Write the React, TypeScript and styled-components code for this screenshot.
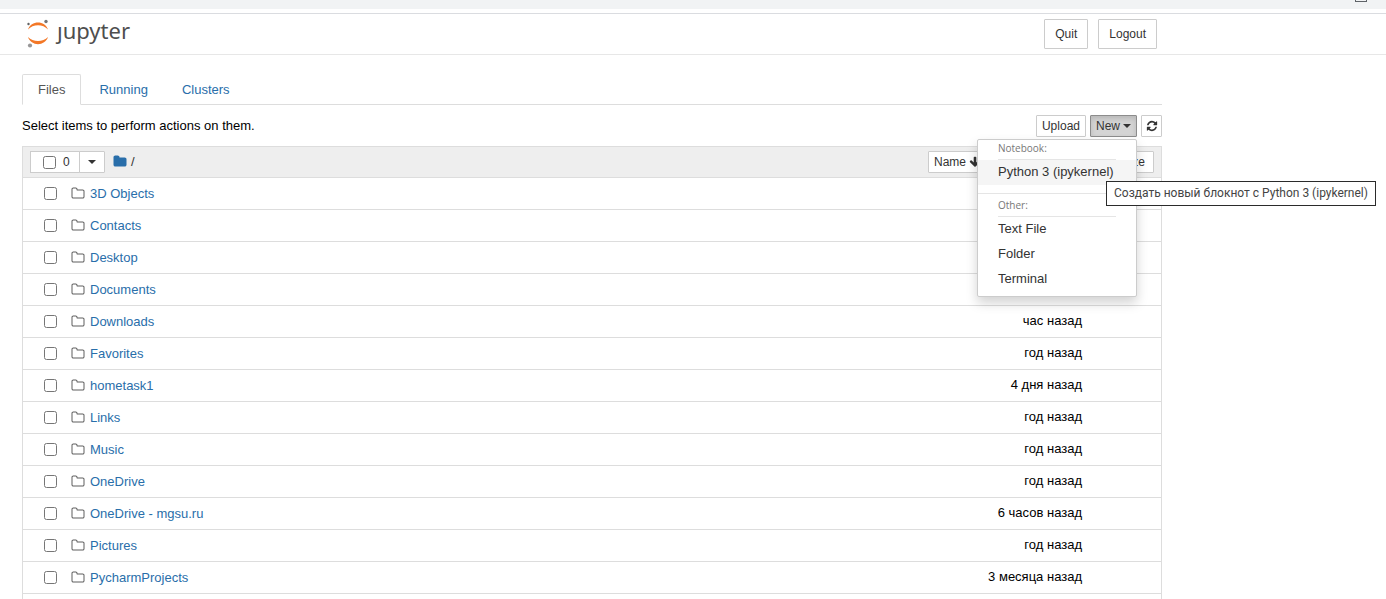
import React from "react";
import styled, { createGlobalStyle } from "styled-components";

const GlobalStyle = createGlobalStyle`
  *, *::before, *::after { box-sizing: border-box; }
  body {
    margin: 0;
    background: #fff;
    color: #000;
    font: 13px/20px "Liberation Sans", Arial, sans-serif;
    overflow: hidden;
  }
`;

const BrowserEdge = styled.div`
  display: flex;
  justify-content: flex-end;
  height: 9px;
  padding-right: 19px;
  background: #f1f3f4;
`;

const WindowGlyph = styled.span`
  width: 12px;
  height: 2px;
  border: 1px solid #5f6368;
  border-top: 0;
`;

const Header = styled.header`
  display: flex;
  justify-content: space-between;
  align-items: center;
  height: 42px;
  margin-top: 4px;
  padding: 0 229px 0 24px;
  border-top: 1px solid #dadce0;
  border-bottom: 1px solid #e7e7e7;
`;

const Brand = styled.a`
  display: flex;
  gap: 9px;
  padding-bottom: 2px;
  color: #4e4e4e;
  font: 22px/24px "Noto Sans", sans-serif;
  text-decoration: none;
`;

const HeaderActions = styled.div`
  display: flex;
  gap: 10px;
`;

const Button = styled.button<{ $size?: "large"; $active?: boolean }>`
  display: inline-flex;
  align-items: center;
  justify-content: center;
  gap: 3px;
  height: ${(p) => (p.$size ? 30 : 22)}px;
  padding: 0 ${(p) => (p.$size ? 10 : 5)}px;
  border: 1px solid ${(p) => (p.$active ? "#8c8c8c" : "#ccc")};
  border-radius: 1px;
  background: ${(p) => (p.$active ? "#d4d4d4" : "#fff")};
  box-shadow: ${(p) => (p.$active ? "inset 0 3px 5px rgba(0, 0, 0, 0.125)" : "none")};
  color: #333;
  font: 12px/18px "Liberation Sans", Arial, sans-serif;
`;

const IconButton = styled(Button)`
  width: 21px;
  padding: 0;
`;

const Page = styled.main`
  margin: 19px 224px 0 22px;
`;

const Tabs = styled.nav`
  display: flex;
  gap: 2px;
  border-bottom: 1px solid #ddd;
`;

const Tab = styled.a<{ $active?: boolean }>`
  height: 31px;
  margin-bottom: -1px;
  padding: 5px 15px;
  border: 1px solid ${(p) => (p.$active ? "#ddd" : "transparent")};
  border-bottom-color: ${(p) => (p.$active ? "#fff" : "transparent")};
  border-radius: 2px 2px 0 0;
  color: ${(p) => (p.$active ? "#555" : "#296eaa")};
  text-decoration: none;
`;

const Toolbar = styled.div`
  display: flex;
  justify-content: space-between;
  align-items: center;
  padding: 10px 0 9px;
`;

const ToolbarActions = styled.div`
  display: flex;
  gap: 4px;
`;

const MenuAnchor = styled.div`
  position: relative;
  display: flex;
`;

const Caret = styled.span`
  border: 4px solid transparent;
  border-top-color: currentColor;
  border-bottom: 0;
`;

const Menu = styled.div`
  position: absolute;
  z-index: 2;
  top: 24px;
  right: 0;
  width: 160px;
  padding: 4px 0;
  border: 1px solid #ccc;
  border-radius: 2px;
  background: #fff;
  box-shadow: 0 6px 12px rgba(0, 0, 0, 0.175);
`;

const MenuHeading = styled.div`
  margin: 0 20px;
  padding-bottom: 7px;
  border-bottom: 1px solid #e5e5e5;
  color: #777;
  font: 10px/8px "Open Sans", sans-serif;
`;

const MenuItem = styled.button<{ $hovered?: boolean }>`
  display: block;
  width: 100%;
  padding: 2px 20px 4px;
  border: 0;
  background: ${(p) => (p.$hovered ? "#f5f5f5" : "transparent")};
  color: #333;
  font: 13px/19px "Liberation Sans", Arial, sans-serif;
  text-align: left;
`;

const MenuDivider = styled.hr`
  height: 1px;
  margin: 8px 0 7px;
  border: 0;
  background: #e5e5e5;
`;

const Tooltip = styled.div`
  position: absolute;
  z-index: 3;
  top: 66px;
  left: 16px;
  padding: 1px 7px;
  border: 1px solid #2b2b2b;
  background: #fff;
  color: #444;
  font: 12px/21px Roboto, sans-serif;
  white-space: nowrap;
`;

const FileTable = styled.table`
  width: 100%;
  border-collapse: collapse;
  border: 1px solid #ddd;
`;

const HeadRow = styled.tr`
  height: 31px;
  background: #eee;
`;

const HeadCell = styled.th`
  padding: 0 7px;
  font-weight: normal;
`;

const Selector = styled.div`
  display: flex;
  align-items: center;
`;

const SelectAll = styled.label`
  display: flex;
  align-items: center;
  gap: 7px;
  width: 50px;
  height: 22px;
  padding-left: 12px;
  border: 1px solid #ccc;
  background: #fff;
  color: #333;
  font-size: 12px;
`;

const SelectMenu = styled(Button)`
  width: 26px;
  margin-left: -1px;
`;

const Crumbs = styled.a`
  display: flex;
  align-items: center;
  gap: 4px;
  margin-left: 8px;
  color: #296eaa;
  text-decoration: none;
`;

const Slash = styled.span`
  color: #333;
`;

const SortButtons = styled.div`
  display: flex;
  justify-content: flex-end;
`;

const SortButton = styled(Button)`
  padding: 0 8px;
  margin-left: -1px;
`;

const NameSort = styled(SortButton)`
  width: 66px;
  padding: 0 5px;
  justify-content: flex-start;
`;

const ModifiedSort = styled(SortButton)`
  width: 100px;
`;

const Row = styled.tr`
  height: 32px;
  border-top: 1px solid #ddd;
`;

const NameCell = styled.td`
  padding: 0 0 0 21px;
`;

const TimeCell = styled.td`
  padding: 0 79px 2px 0;
  text-align: right;
`;

const Entry = styled.div`
  display: flex;
  align-items: center;
  gap: 14px;
`;

const FileLink = styled.a`
  display: flex;
  align-items: center;
  gap: 5px;
  color: #296eaa;
  text-decoration: none;
`;

const Checkbox = styled.input.attrs({ type: "checkbox" })`
  width: 13px;
  height: 13px;
  margin: 0;
`;

const Icon = styled.svg`
  flex: none;
  fill: currentColor;
`;

const FolderOutline = styled(Icon)`
  color: #5e5e5e;
`;

const folderPath =
  "M1728 608v704q0 92-66 158t-158 66h-1216q-92 0-158-66t-66-158v-960q0-92 66-158t158-66h320q92 0 158 66t66 158v32h672q92 0 158 66t66 158z";
const folderOutlinePath =
  "M1600 1312v-704q0-40-28-68t-68-28h-704q-40 0-68-28t-28-68v-64q0-40-28-68t-68-28h-320q-40 0-68 28t-28 68v960q0 40 28 68t68 28h1216q40 0 68-28t28-68zm128-704v704q0 92-66 158t-158 66h-1216q-92 0-158-66t-66-158v-960q0-92 66-158t158-66h320q92 0 158 66t66 158v32h672q92 0 158 66t66 158z";
const refreshPath =
  "M1639 1056q0 5-1 7-64 268-268 434.500t-478 166.500q-146 0-282.500-55t-243.500-157l-129 129q-19 19-45 19t-45-19-19-45v-448q0-26 19-45t45-19h448q26 0 45 19t19 45-19 45l-137 137q71 66 161 102t187 36q134 0 250-65t186-179q11-17 53-117 8-23 30-23h192q13 0 22.500 9.500t9.500 22.500zm25-800v448q0 26-19 45t-45 19h-448q-26 0-45-19t-19-45 19-45l138-138q-148-137-349-137-134 0-250 65t-186 179q-11 17-53 117-8 23-30 23h-199q-13 0-22.500-9.500t-9.500-22.500v-7q65-268 270-434.500t480-166.500q146 0 284 55.500t245 156.500l130-129q19-19 45-19t45 19 19 45z";
const arrowDownPath =
  "M1675 832q0 53-37 90l-651 652q-39 37-91 37-53 0-90-37l-651-652q-38-36-38-90 0-53 38-91l74-75q39-37 91-37 53 0 90 37l294 294v-704q0-52 38-90t90-38h128q52 0 90 38t38 90v704l294-294q37-37 90-37 52 0 91 37l75 75q37 39 37 91z";

const entries: { name: string; modified: string }[] = [
  { name: "3D Objects", modified: "" },
  { name: "Contacts", modified: "" },
  { name: "Desktop", modified: "" },
  { name: "Documents", modified: "" },
  { name: "Downloads", modified: "час назад" },
  { name: "Favorites", modified: "год назад" },
  { name: "hometask1", modified: "4 дня назад" },
  { name: "Links", modified: "год назад" },
  { name: "Music", modified: "год назад" },
  { name: "OneDrive", modified: "год назад" },
  { name: "OneDrive - mgsu.ru", modified: "6 часов назад" },
  { name: "Pictures", modified: "год назад" },
  { name: "PycharmProjects", modified: "3 месяца назад" },
];

function Logo() {
  return (
    <svg width="24" height="30" viewBox="0 0 24 30" aria-hidden="true">
      <path d="M4 11.500C7 2 21 2 24 11.500C19 5.800 9 5.800 4 11.500Z" fill="#f37726" />
      <path d="M4 19C7 28.500 21 28.500 24 19C19 24.300 9 24.300 4 19Z" fill="#f37726" />
      <circle cx="22" cy="3.500" r="1.700" fill="#767677" />
      <circle cx="4.500" cy="6" r="1.200" fill="#616262" />
      <circle cx="6" cy="27.500" r="2.100" fill="#989798" />
    </svg>
  );
}

export default function App() {
  return (
    <>
      <GlobalStyle />
      <BrowserEdge>
        <WindowGlyph />
      </BrowserEdge>
      <Header>
        <Brand href="#">
          <Logo />
          <span>ȷupyter</span>
        </Brand>
        <HeaderActions>
          <Button $size="large">Quit</Button>
          <Button $size="large">Logout</Button>
        </HeaderActions>
      </Header>
      <Page>
        <Tabs>
          <Tab href="#files" $active>Files</Tab>
          <Tab href="#running">Running</Tab>
          <Tab href="#clusters">Clusters</Tab>
        </Tabs>
        <Toolbar>
          <span>Select items to perform actions on them.</span>
          <ToolbarActions>
            <Button>Upload</Button>
            <MenuAnchor>
              <Button $active aria-expanded="true">
                New <Caret />
              </Button>
              <Menu>
                <MenuHeading>Notebook:</MenuHeading>
                <MenuItem $hovered>Python 3 (ipykernel)</MenuItem>
                <MenuDivider />
                <MenuHeading>Other:</MenuHeading>
                <MenuItem>Text File</MenuItem>
                <MenuItem>Folder</MenuItem>
                <MenuItem>Terminal</MenuItem>
              </Menu>
              <Tooltip role="tooltip">Создать новый блокнот с Python 3 (ipykernel)</Tooltip>
            </MenuAnchor>
            <IconButton aria-label="Refresh">
              <Icon width="12" height="12" viewBox="0 0 1792 1792"><path d={refreshPath} /></Icon>
            </IconButton>
          </ToolbarActions>
        </Toolbar>
        <FileTable>
          <thead>
            <HeadRow>
              <HeadCell>
                <Selector>
                  <SelectAll>
                    <Checkbox /> 0
                  </SelectAll>
                  <SelectMenu aria-label="Selection options">
                    <Caret />
                  </SelectMenu>
                  <Crumbs href="#root">
                    <Icon width="14" height="14" viewBox="0 64 1792 1792"><path d={folderPath} /></Icon>
                    <Slash>/</Slash>
                  </Crumbs>
                </Selector>
              </HeadCell>
              <HeadCell>
                <SortButtons>
                  <NameSort>
                    Name
                    <Icon width="12" height="12" viewBox="0 0 1792 1792"><path d={arrowDownPath} /></Icon>
                  </NameSort>
                  <ModifiedSort>Last Modified</ModifiedSort>
                  <SortButton>File size</SortButton>
                </SortButtons>
              </HeadCell>
            </HeadRow>
          </thead>
          <tbody>
            {entries.map((entry) => (
              <Row key={entry.name}>
                <NameCell>
                  <Entry>
                    <Checkbox aria-label={`Select ${entry.name}`} />
                    <FileLink href="#folder">
                      <FolderOutline width="14" height="14" viewBox="0 64 1792 1792"><path d={folderOutlinePath} /></FolderOutline>
                      {entry.name}
                    </FileLink>
                  </Entry>
                </NameCell>
                <TimeCell>{entry.modified}</TimeCell>
              </Row>
            ))}
            <Row>
              <NameCell />
              <TimeCell />
            </Row>
          </tbody>
        </FileTable>
      </Page>
    </>
  );
}
